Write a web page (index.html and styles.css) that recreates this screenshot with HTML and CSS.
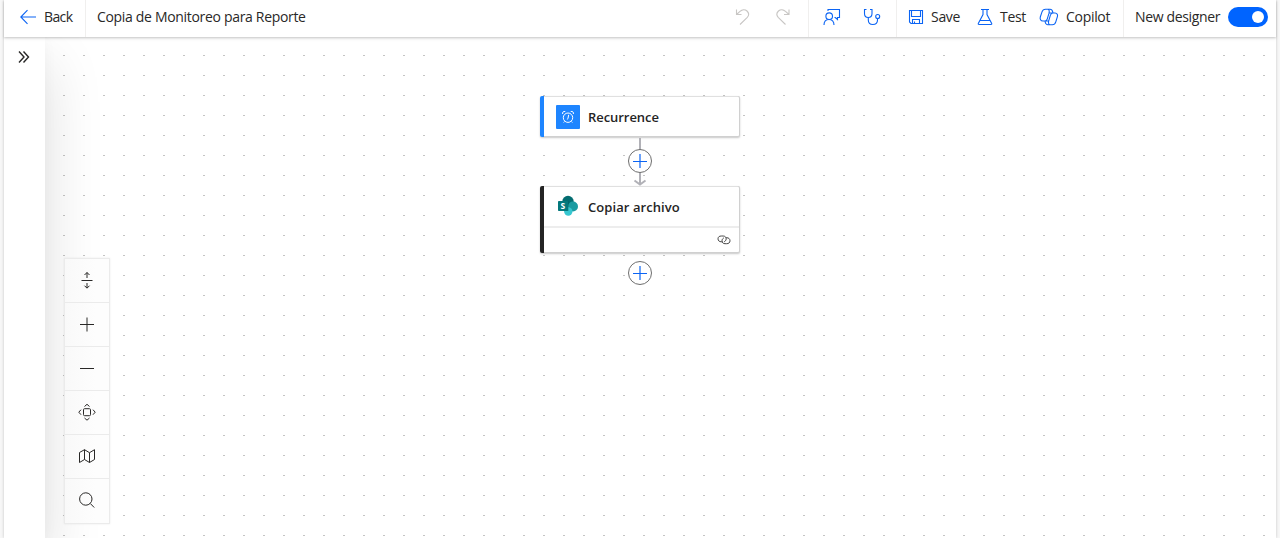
FILE: index.html
```html
<!DOCTYPE html>
<html lang="es">
<head>
<meta charset="utf-8">
<title>Copia de Monitoreo para Reporte</title>
<link rel="stylesheet" href="styles.css">
</head>
<body>
<div class="app">
  <header class="bar">
    <div class="back">
      <svg width="16" height="16" viewBox="0 0 16 16"><path d="M16 8H1M7.500 1.200.8 8l6.700 6.800"/></svg>
      <span class="t-back">Back</span>
    </div>
    <div class="title"><span class="t-title">Copia de Monitoreo para Reporte</span></div>
    <div class="history">
      <svg width="16" height="18" viewBox="0 0 16 18"><path d="M1.500 1.500V6.500H6.500M1.500 6.500 5 3.300C7 1.500 10 1.200 12 3C14 5 14 7.500 12.300 9.300L5 16.500"/></svg>
      <svg width="16" height="18" viewBox="0 0 16 18"><path d="M14 1.500V6.500H9M14 6.500 10.500 3.300C8.500 1.500 5.500 1.200 3.500 3C1.500 5 1.500 7.500 3.200 9.300L10.500 16.500"/></svg>
    </div>
    <div class="checks">
      <svg width="18" height="18" viewBox="0 0 18 18"><path d="M5 3V1.500H16.500V9.500H14.500V11.500L12.300 9.500H11.500M1 17C1 13.500 3 11.500 6 11.500S11 13.500 11 17"/><circle cx="6.200" cy="8.200" r="3.300"/></svg>
      <svg width="18" height="18" viewBox="0 0 18 18"><path d="M3.500 1.500H1.500V5.500C1.500 8 3 9.500 5.200 9.500S9 8 9 5.500V1.500H7M5.300 9.500V12C5.300 15 7 16.500 9.800 16.500S14.500 15 14.500 12V10.500"/><circle cx="14.700" cy="8.500" r="2"/></svg>
    </div>
    <div class="commands">
      <div class="cmd">
        <svg width="16" height="16" viewBox="0 0 16 16"><path d="M1.500 1.500H14.500V14.500H3L1.500 13ZM3.500 1.500V7.500H12.500V1.500M4.500 14.500V10.500H11.500V14.500M6.500 14.500V12.500"/></svg>
        <span class="t-save">Save</span>
      </div>
      <div class="cmd cmd-test">
        <svg width="16" height="18" viewBox="0 0 16 18"><path d="M4 1.500H12M6 1.500V6.500L1.300 15.500Q1 16.500 2 16.500H14Q15 16.500 14.700 15.500L10 6.500V1.500M3.500 12.500H12.500"/></svg>
        <span class="t-test">Test</span>
      </div>
      <div class="cmd cmd-copilot">
        <svg width="20" height="18" viewBox="0 0 20 18"><path d="M6 13H4C1.500 13 .8 11 1.300 9L3 3.800C3.600 2 4.500 1.200 6.500 1.200H11C12.800 1.200 13.400 2.300 13.700 3.800L14 5H16C18.300 5 18.900 7 18.400 8.700L16.800 13.800C16.200 15.700 15.300 16.700 13.300 16.700H8.800C7.200 16.700 6.500 15.500 6.200 14L6 13C7.300 13 7.900 12 8.300 10.800L10 5.200C10.500 3.300 10.300 1.500 8.800 1.300M14 5C12.500 5 11.800 6 11.400 7.200L9.700 12.800C9.200 14.700 9.500 16.500 11 16.700M10 5H14M6 13H9.700"/></svg>
        <span class="t-copilot">Copilot</span>
      </div>
    </div>
    <div class="designer">
      <span class="t-designer">New designer</span>
      <span class="toggle"></span>
    </div>
  </header>
  <div class="body">
    <aside class="panel">
      <svg width="14" height="14" viewBox="0 0 14 14"><path d="M2 1.500 7 7 2 12.500M6.500 1.500 11.500 7 6.500 12.500"/></svg>
    </aside>
    <main class="canvas">
      <div class="node trigger">
        <div class="node-head">
          <span class="badge"><svg width="16" height="16" viewBox="0 0 16 16"><circle cx="8" cy="8.700" r="4.700"/><path d="M8.700 5.800 8 9.200 7.300 10.500M2.700 5C2 3.300 3.500 2 5.300 2.600M13.300 5C14 3.300 12.500 2 10.700 2.600M4.500 12.500 3.700 13.500M11.500 12.500 12.300 13.500"/></svg></span>
          <span class="t-recurrence">Recurrence</span>
        </div>
      </div>
      <svg class="edge" width="14" height="49" viewBox="0 0 14 49"><path d="M7 0V46M1.500 42.500 7 46.500 12.500 42.500"/></svg>
      <button class="add add-middle"><svg width="14" height="14" viewBox="0 0 14 14"><path d="M0 7.500H14M7 0V14"/></svg></button>
      <div class="node action">
        <div class="node-head">
          <svg class="sharepoint" width="24" height="24" viewBox="0 0 24 24"><circle cx="12" cy="7.500" r="5.700" fill="#036c70"/><circle cx="17" cy="12.500" r="5" fill="#1a9ba1"/><circle cx="12.300" cy="17.500" r="4.200" fill="#37c6d0"/><path d="M8 7H12.500V17H8Z" fill="#025659" opacity=".45"/><rect x="2" y="7" width="10" height="10" rx=".8" fill="#03787c"/><text x="4.400" y="15" font-size="8.500">S</text></svg>
          <span class="t-copiar">Copiar archivo</span>
        </div>
        <div class="node-foot">
          <svg width="14" height="12" viewBox="0 0 14 12"><path d="M5.500 7.800H4.300C2.200 7.800 1 6.500 1 4.800S2.200 2 4.300 2H6.200C8 2 9.200 3.200 9.200 4.800C9.200 6.500 8 7.500 7 7.800M8.700 3.700H9.700C11.700 3.700 13 5 13 6.800S11.700 9.700 9.700 9.700H8C6.200 9.700 5 8.500 5 6.800C5 5.200 6 4.200 7 3.900"/></svg>
        </div>
      </div>
      <button class="add add-end"><svg width="14" height="14" viewBox="0 0 14 14"><path d="M0 7.500H14M7 0V14"/></svg></button>
      <div class="tools">
        <div class="tool"><svg width="18" height="18" viewBox="0 0 18 18"><path d="M3.500 9.500H14.500M9 7V1.500M6.500 4 9 1.500 11.500 4M9 12V17M6.500 14.700 9 17.200 11.500 14.700"/></svg></div>
        <div class="tool"><svg width="18" height="18" viewBox="0 0 18 18"><path d="M2 9.500H16M9 2.500V16.500"/></svg></div>
        <div class="tool"><svg width="18" height="18" viewBox="0 0 18 18"><path d="M2 9.500H16"/></svg></div>
        <div class="tool"><svg width="18" height="18" viewBox="0 0 18 18"><rect x="5.500" y="5.700" width="7" height="7" rx="1"/><path d="M6.500 3.500 9 1.300 11.500 3.500M6.500 15 9 17.200 11.500 15M3 6.700.8 9.200 3 11.700M15 6.700 17.200 9.200 15 11.700"/></svg></div>
        <div class="tool"><svg width="18" height="18" viewBox="0 0 18 18"><path d="M1.500 5.500 6.500 2.700 11.500 5.700 16.500 2.700V12.500L11.500 15.500 6.500 12.500 1.500 15.500ZM6.500 2.700V12.500M11.500 5.700V15.500"/></svg></div>
        <div class="tool"><svg width="18" height="18" viewBox="0 0 18 18"><circle cx="7.800" cy="8" r="6.200"/><path d="M12.300 12.500 16.200 16.500"/></svg></div>
      </div>
    </main>
  </div>
</div>
</body>
</html>
```
FILE: styles.css
```css
* { box-sizing: border-box; }
body {
  margin: 0;
  height: 538px;
  overflow: hidden;
  background: #f7f7f7;
  color: #292827;
  font: 14px/20px "Open Sans", "Noto Sans", sans-serif;
}
svg { display: block; flex: none; fill: none; stroke: currentColor; stroke-width: 1; }
.app {
  display: flex;
  flex-direction: column;
  width: 1272px;
  height: 538px;
  margin-left: 4px;
  background: #fff;
  box-shadow: 0 0 3px rgba(0, 0, 0, .2);
}
.bar {
  position: relative;
  z-index: 3;
  display: flex;
  flex: none;
  height: 37px;
  background: #fff;
  box-shadow: 0 1px 2px rgba(0, 0, 0, .18), 0 2px 4px rgba(0, 0, 0, .06);
}
.bar > div { display: flex; height: 37px; padding-bottom: 3px; align-items: center; white-space: nowrap; }
.bar svg { color: #0b64f4; stroke-width: 1.100; }
.bar .back { width: 82px; padding-left: 16px; gap: 8px; border-right: 1px solid #f0efee; }
.bar .title { flex: 1; padding-left: 11px; }
.bar .history { width: 73px; gap: 24px; }
.bar .history svg { color: #c8c6c4; }
.bar .checks { width: 88px; padding-left: 14px; gap: 22px; border-left: 1px solid #f0efee; }
.bar .commands { width: 227px; padding-left: 11px; border-left: 1px solid #f0efee; }
.cmd { display: flex; align-items: center; gap: 7px; width: 69px; }
.cmd-test { width: 62px; }
.cmd-copilot { width: 80px; gap: 7px; }
.bar .designer { width: 153px; padding-left: 11px; gap: 8px; border-left: 1px solid #f0efee; }
.t-back { letter-spacing: -.6px; }
.t-title { letter-spacing: -.32px; }
.t-save, .t-test, .t-copilot { letter-spacing: -.3px; }
.t-designer { letter-spacing: -.35px; }
.toggle { width: 40px; height: 20px; margin-left: auto; margin-right: 8px; padding: 4px; border-radius: 10px; background: #0064ff; }
.bar .designer .toggle { margin-right: 8px; }
.toggle::after { content: ""; display: block; width: 12px; height: 12px; margin-left: 20px; border-radius: 50%; background: #fff; }
.bar .designer { margin-right: 0; }
.body { display: flex; flex: 1; overflow: hidden; }
.panel {
  position: relative;
  z-index: 1;
  width: 41px;
  padding: 13px 0 0 13px;
  background: #fff;
  box-shadow: 0 26px 58px rgba(0, 0, 0, .15), 0 5px 14px rgba(0, 0, 0, .04);
}
.panel svg { stroke-width: 1.400; }
.canvas {
  position: relative;
  flex: 1;
  background: conic-gradient(from 270deg at 2px 1px, #c4c4c4 90deg, transparent 0) 18px 18px / 20px 20px;
}
.node {
  position: absolute;
  left: 495px;
  width: 200px;
  border-left: 4px solid #1e85ff;
  border-radius: 2px;
  background: #fff;
  box-shadow: inset -1px 0 #d0d0d0, inset 0 1px #e0e0e0, inset 0 -1px #d0d0d0, 0 1px 2px rgba(0, 0, 0, .22);
}
.trigger { top: 59px; height: 41px; }
.action { top: 149px; height: 67px; border-left-color: #242424; }
.node-head { display: flex; align-items: center; gap: 8px; height: 41px; padding-left: 12px; font-weight: 600; color: #242424; }
.badge { display: grid; place-items: center; width: 24px; height: 24px; border-radius: 1px; background: #1e85ff; color: #fff; }
.sharepoint { stroke: none; }
.sharepoint text { fill: #fff; font-weight: 700; }
.t-recurrence, .t-copiar { padding-top: 1px; font-size: 13px; letter-spacing: -.05px; }
.t-copiar { letter-spacing: .07px; }
.action .node-head { height: 40px; }
.node-foot { display: flex; justify-content: flex-end; align-items: center; height: 26px; margin-right: 1px; padding-right: 8px; border-top: 2px solid #ededed; color: #484848; }
.edge { position: absolute; left: 588px; top: 101px; color: #b1b1b7; stroke-width: 2; }
.add { position: absolute; left: 583px; display: grid; place-items: center; width: 24px; height: 24px; padding: 0; border: 1px solid #6e6e6e; border-radius: 50%; background: #fff; color: #0b64f4; }
.add svg { stroke-width: 1.200; }
.add-middle { top: 112px; }
.add-end { top: 224px; }
.tools { position: absolute; left: 19px; top: 221px; z-index: 1; width: 46px; border: 1px solid #ebebeb; background: linear-gradient(90deg, #f9f9f9, #fdfdfd 70%); box-shadow: 0 0 2px rgba(0, 0, 0, .08); }
.tool { display: grid; place-items: center; height: 44px; padding-bottom: 1px; border-bottom: 1px solid #ebebeb; }
.tool:last-child { border-bottom: 0; padding-bottom: 2px; }
```
